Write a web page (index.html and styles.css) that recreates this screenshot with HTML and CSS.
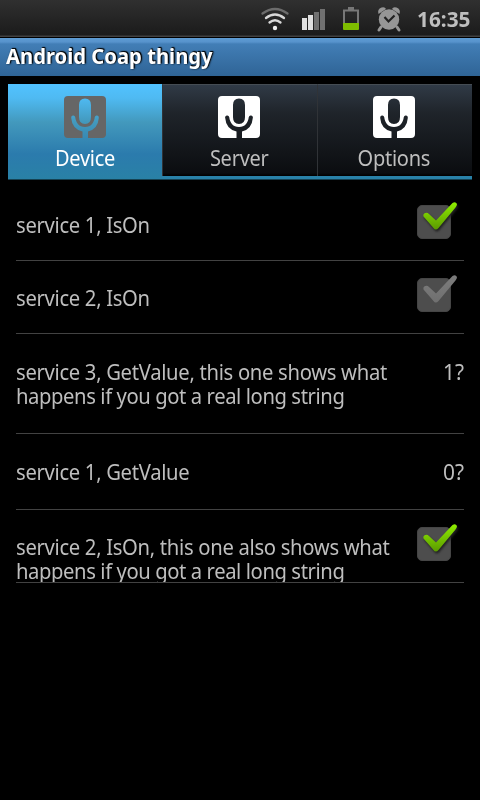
FILE: index.html
```html
<!DOCTYPE html>
<html lang="en">
<head>
<meta charset="utf-8">
<title>Android Coap thingy</title>
<link rel="stylesheet" href="styles.css">
</head>
<body>
<svg class="defs" width="0" height="0" aria-hidden="true">
  <defs>
    <linearGradient id="green" x1="0" y1="0" x2="0" y2="1"><stop offset="0" stop-color="#8fee00"/><stop offset="1" stop-color="#5b9a00"/></linearGradient>
    <linearGradient id="gray" x1="0" y1="0" x2="0" y2="1"><stop offset="0" stop-color="#7c7c7c"/><stop offset="1" stop-color="#707070"/></linearGradient>
    <symbol id="mic" viewBox="0 0 44 44">
      <path fill-rule="evenodd" d="M5 1H39Q43 1 43 5V39Q43 43 39 43H25V36.500Q35 34 35.800 23A2 2 0 0 0 31.800 22C31 28 28 32 22 32S13 28 12.200 22A2 2 0 0 0 8.200 23Q9 34 19.500 36.500V43H5Q1 43 1 39V5Q1 1 5 1ZM22 3.500Q28 3.500 28 10V22Q28 29 22 29T16 22V10Q16 3.500 22 3.500Z"/>
    </symbol>
    <symbol id="box" viewBox="0 0 48 48">
      <rect x="5.500" y="9.500" width="33" height="33" rx="4.500" fill="#4d4d4d" stroke="#454545"/>
    </symbol>
    <symbol id="tick" viewBox="0 0 48 48">
      <path d="M12.200 17.500Q15 15.700 17 18L24 24.500L40.500 7Q43.500 5 45 8Q45 9.500 43.500 11.500L26.500 32Q23.700 35 21.500 32L11.500 20.500Q11 18.500 12.200 17.500Z"/>
    </symbol>
  </defs>
</svg>
<header class="status">
  <svg width="230" height="38" viewBox="0 0 230 38">
    <g fill="none" stroke-linecap="round" stroke-width="2.300">
      <path stroke="#6c6c6c" d="M12.500 13.500Q25 4.500 37.500 13.500"/>
      <path stroke="#d8d8d8" d="M16 18Q25 11 34 18M19.500 22.500Q25 18 30.500 22.500"/>
    </g>
    <circle cx="25" cy="28" r="2.200" fill="#eee"/>
    <path fill="#e0e0e0" d="M52 18h5v12h-5zM58 15h5v15h-5z"/>
    <path fill="#707070" d="M64 12h5v18h-5zM70 9h5v21h-5z"/>
    <path fill="none" stroke="#777" stroke-width="2" d="M94 23V10.500H108V23"/>
    <path fill="#777" d="M98 7h6v3h-6z"/>
    <path fill="#7ebc00" d="M93 23h16v6q0 1-1 1H94q-1 0-1-1z"/>
    <g fill="#969696" stroke="#969696" stroke-linecap="round">
      <path stroke-width="3" d="M131 27l-2 3M147 27l2 3"/>
      <path stroke="none" d="M128.500 14Q127 9 131.500 7.500Q135 6.500 136 9ZM149.500 14Q151 9 146.500 7.500Q143 6.500 142 9Z"/>
      <circle cx="139" cy="19.500" r="10.200" stroke="none"/>
    </g>
    <path d="M134.500 17l4 4.500l6-6" fill="none" stroke="#222" stroke-width="2.200"/>
  </svg>
  <span class="clock">16:35</span>
</header>
<div class="title"><span>Android Coap thingy</span></div>
<nav class="tabs">
  <div class="tab active"><svg class="mic" width="44" height="44"><use href="#mic"/></svg><span>Device</span></div>
  <div class="tab"><svg class="mic" width="44" height="44"><use href="#mic"/></svg><span>Server</span></div>
  <div class="tab"><svg class="mic" width="44" height="44"><use href="#mic"/></svg><span>Options</span></div>
</nav>
<main class="list">
  <div class="row"><p class="label">service 1, IsOn</p><svg class="check on" width="48" height="48"><use href="#box"/><use class="tick" href="#tick"/></svg></div>
  <div class="row"><p class="label">service 2, IsOn</p><svg class="check" width="48" height="48"><use href="#box"/><use class="tick" href="#tick"/></svg></div>
  <div class="row tall"><p class="label">service 3, GetValue, this one shows what<br><span class="second">happens if you got a real long string</span></p><p class="value">1?</p></div>
  <div class="row medium"><p class="label">service 1, GetValue</p><p class="value">0?</p></div>
  <div class="row"><p class="label">service 2, IsOn, this one also shows what<br><span class="second">happens if you got a real long string</span></p><svg class="check on" width="48" height="48"><use href="#box"/><use class="tick" href="#tick"/></svg></div>
</main>
</body>
</html>
```
FILE: styles.css
```css
* { box-sizing: border-box; }
body { margin: 0; width: 480px; height: 800px; overflow: hidden; background: #000; color: #bebebe; font: 22px/24px "Noto Sans", sans-serif; }
p { margin: 0; }
.defs { display: block; width: 0; height: 0; }
.status { height: 38px; display: flex; align-items: flex-start; padding-left: 250px; background: linear-gradient(#303030, #1b1b1b 35px, #404040 36px, #404040 37px, #000 37px); }
.status svg { flex: none; margin-right: -63px; }
.clock { margin-top: 7px; font-size: 21px; font-weight: 700; transform: scaleX(.99); transform-origin: left; }
.title { height: 38px; padding: 5px 6px 0; background: linear-gradient(#5d9bd3, #5793cc 4px, #427eb6 6px, #2f6496); color: #fff; font-weight: 700; text-shadow: 1px -1px 1px #000, 1px 0 2px #000; }
.title span { display: inline-block; white-space: nowrap; transform: scaleX(.92); transform-origin: left; }
.tabs { display: grid; grid-template-columns: 154px 155px 155px; height: 96px; margin: 8px 8px 0; border-bottom: 1px solid #154253; background: #2982a9; }
.tab { height: 92px; display: flex; flex-direction: column; align-items: center; padding: 10px 2px 0 0; background: linear-gradient(#303a46, #1f242a 28px, #0b0d10 88px, #000); border-left: 1px solid #303337; border-top: 1px solid #454c53; }
.tab.active { height: 95px; border: 0; padding: 11px 0 0; background: linear-gradient(#51c2ff, #4fbaf2 14px, #4399bd 38px, #2b7bad 70px, #2981a6); color: #fff; }
.mic { flex: none; fill: #fff; }
.active .mic { fill: #666; }
.tab span { margin-top: 6px; letter-spacing: -.3px; transform: scaleX(.91); }
.list { margin: 8px 16px 0; }
.row { height: 73px; display: flex; justify-content: space-between; align-items: flex-start; padding-top: 24px; border-bottom: 1px solid #424242; overflow: hidden; }
.tall { height: 100px; padding-top: 25px; }
.medium { height: 76px; padding-top: 25px; }
.label { flex: none; white-space: nowrap; letter-spacing: -.34px; transform: scaleX(.92); transform-origin: left; }
.second { letter-spacing: -.45px; }
.value { transform: scaleX(.95); transform-origin: right; }
.check { flex: none; position: relative; margin: -16px 4px 0 -60px; }
.tick { fill: url(#gray); }
.on .tick { fill: url(#green); filter: drop-shadow(1px 2px 1px #222); }
```
